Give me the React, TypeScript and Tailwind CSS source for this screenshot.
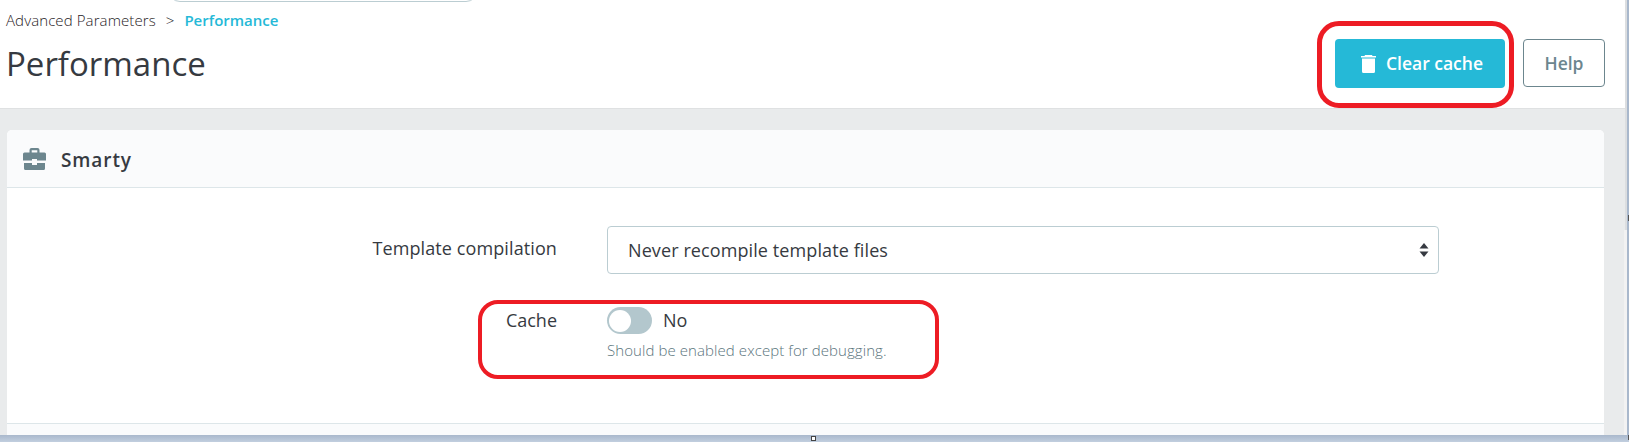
import React from "react";

function Briefcase() {
  return (
    <svg width="25" height="24" viewBox="0 0 25 24" className="shrink-0">
      <path fill="#6c868e" d="M7.500 6V3A2 2 0 0 1 9.500 1h6A2 2 0 0 1 17.500 3V6h-2.200V3.200h-5.600V6z" />
      <path fill="#6c868e" d="M1 7A1.500 1.500 0 0 1 2.500 5.500h20A1.500 1.500 0 0 1 24 7v6.500H15v-1.500h-5v1.500H1z" />
      <path fill="#6c868e" d="M2 16h8v2h5v-2h8v5.500a1.500 1.500 0 0 1-1.500 1.500h-18A1.500 1.500 0 0 1 2 21.500z" />
    </svg>
  );
}

function Trash() {
  return (
    <svg width="15" height="18" viewBox="0 0 15 18" className="shrink-0">
      <path fill="#fff" d="M4 0h7l.5 1H15v1.500H0V1h3.500z" />
      <path fill="#fff" d="M1 3.500h13v13a1.500 1.500 0 0 1-1.500 1.500h-10A1.500 1.500 0 0 1 1 16.500z" />
    </svg>
  );
}

function Updown() {
  return (
    <svg width="10" height="14" viewBox="0 0 10 14" className="absolute right-[9px] top-[16px]">
      <path fill="#363a41" d="M5 0l4.500 5.500H.5z" />
      <path fill="#363a41" d="M5 14L.5 8.500h9z" />
    </svg>
  );
}

export default function App() {
  return (
    <div className="relative h-[442px] w-[1629px] overflow-hidden bg-[#e9ebec] font-['Open_Sans',sans-serif] text-[#363a41]">
      <div className="relative mr-[4px] h-[109px] border-b border-[#dfe1e2] bg-white pl-[6px]">
        <div className="absolute left-[168px] top-[-30px] h-[32px] w-[310px] rounded-[12px] border border-[#bbcdd2]" />
        <div className="flex h-[41px] items-center text-[15px]">
          <span className="font-light tracking-[0.1px] text-[#1f2226]">Advanced Parameters</span>
          <span className="ml-[10px] font-light text-[#1f2226]">&gt;</span>
          <span className="ml-[10px] font-semibold text-[#25b9d7]">Performance</span>
        </div>
        <div className="flex items-start justify-between pr-[20px]">
          <h1 className="pt-[1px] text-[33px] leading-[44px] font-normal">Performance</h1>
          <div className="mt-[-2px] flex gap-[18px]">
            <button className="flex h-[49px] w-[170px] items-center justify-center gap-[10px] rounded-[4px] bg-[#25b9d7] pl-[4px] text-[17.5px] font-semibold text-white">
              <Trash />
              Clear cache
            </button>
            <button className="h-[48px] w-[82px] rounded-[4px] border border-[#6c868e] bg-white text-[17.5px] font-semibold text-[#6c868e]">
              Help
            </button>
          </div>
        </div>
      </div>

      <div className="ml-[7px] mt-[21px] w-[1597px] overflow-hidden rounded-t-[5px] bg-white">
        <div className="flex h-[58px] items-center gap-[14px] border-b border-[#dde6e9] bg-[#fafbfc] pl-[15px]">
          <Briefcase />
          <span className="pt-[3px] text-[19px] font-semibold tracking-[0.9px]">Smarty</span>
        </div>
        <div className="h-[235px] pt-[38px]">
          <div className="flex gap-[50px]">
            <label className="w-[550px] pt-[8px] text-right text-[18px] leading-[28px] tracking-[0.1px]">Template compilation</label>
            <div className="relative h-[48px] w-[832px] rounded-[4px] border border-[#bbcdd2] pl-[20px] text-[18px] leading-[46px] tracking-[0.1px]">
              Never recompile template files
              <Updown />
            </div>
          </div>
          <div className="mt-[32px] flex gap-[50px]">
            <label className="w-[550px] text-right text-[18px] leading-[28px]">Cache</label>
            <div className="pt-[1px]">
              <div className="flex h-[27px] items-center">
                <div className="flex h-[27px] w-[45px] items-center rounded-full bg-[#b3c7cd] pl-[2px]">
                  <div className="h-[22px] w-[22px] rounded-full bg-white" />
                </div>
                <span className="ml-[11px] text-[18px] leading-[27px]">No</span>
              </div>
              <p className="mt-[6px] text-[15px] leading-[20px] font-light tracking-[0.08px] text-[#5a747c]">Should be enabled except for debugging.</p>
            </div>
          </div>
        </div>
        <div className="h-[12px] border-t border-[#dde6e9] bg-[#fafbfc]" />
      </div>

      <div className="absolute bottom-0 right-[2px] top-[230px] w-[3px] bg-[#f2f2f2]" />
      <div className="absolute right-[2px] top-0 h-[230px] w-[2px] bg-[#dcdee0]" />
      <div className="absolute bottom-0 right-0 top-0 w-[2px] bg-[#a9b8cc]" />
      <div className="absolute right-0 top-[215px] h-[6px] w-[1px] bg-[#555]" />
      <div className="absolute inset-x-0 bottom-0 h-[7px] bg-gradient-to-b from-[#a9b8cc] to-[#c2cfdf]" />
      <div className="absolute bottom-[1px] left-[811px] h-[5px] w-[5px] border border-[#444] bg-white" />
      <div className="absolute bottom-[2px] right-0 h-[5px] w-[1px] bg-[#555]" />

      <div className="pointer-events-none absolute left-[1317px] top-[21px] h-[87px] w-[197px] rounded-[22px] border-[5px] border-[#ed1c24]" />
      <div className="pointer-events-none absolute left-[478px] top-[300px] h-[79px] w-[461px] rounded-[20px] border-[4px] border-[#ed1c24]" />
    </div>
  );
}
